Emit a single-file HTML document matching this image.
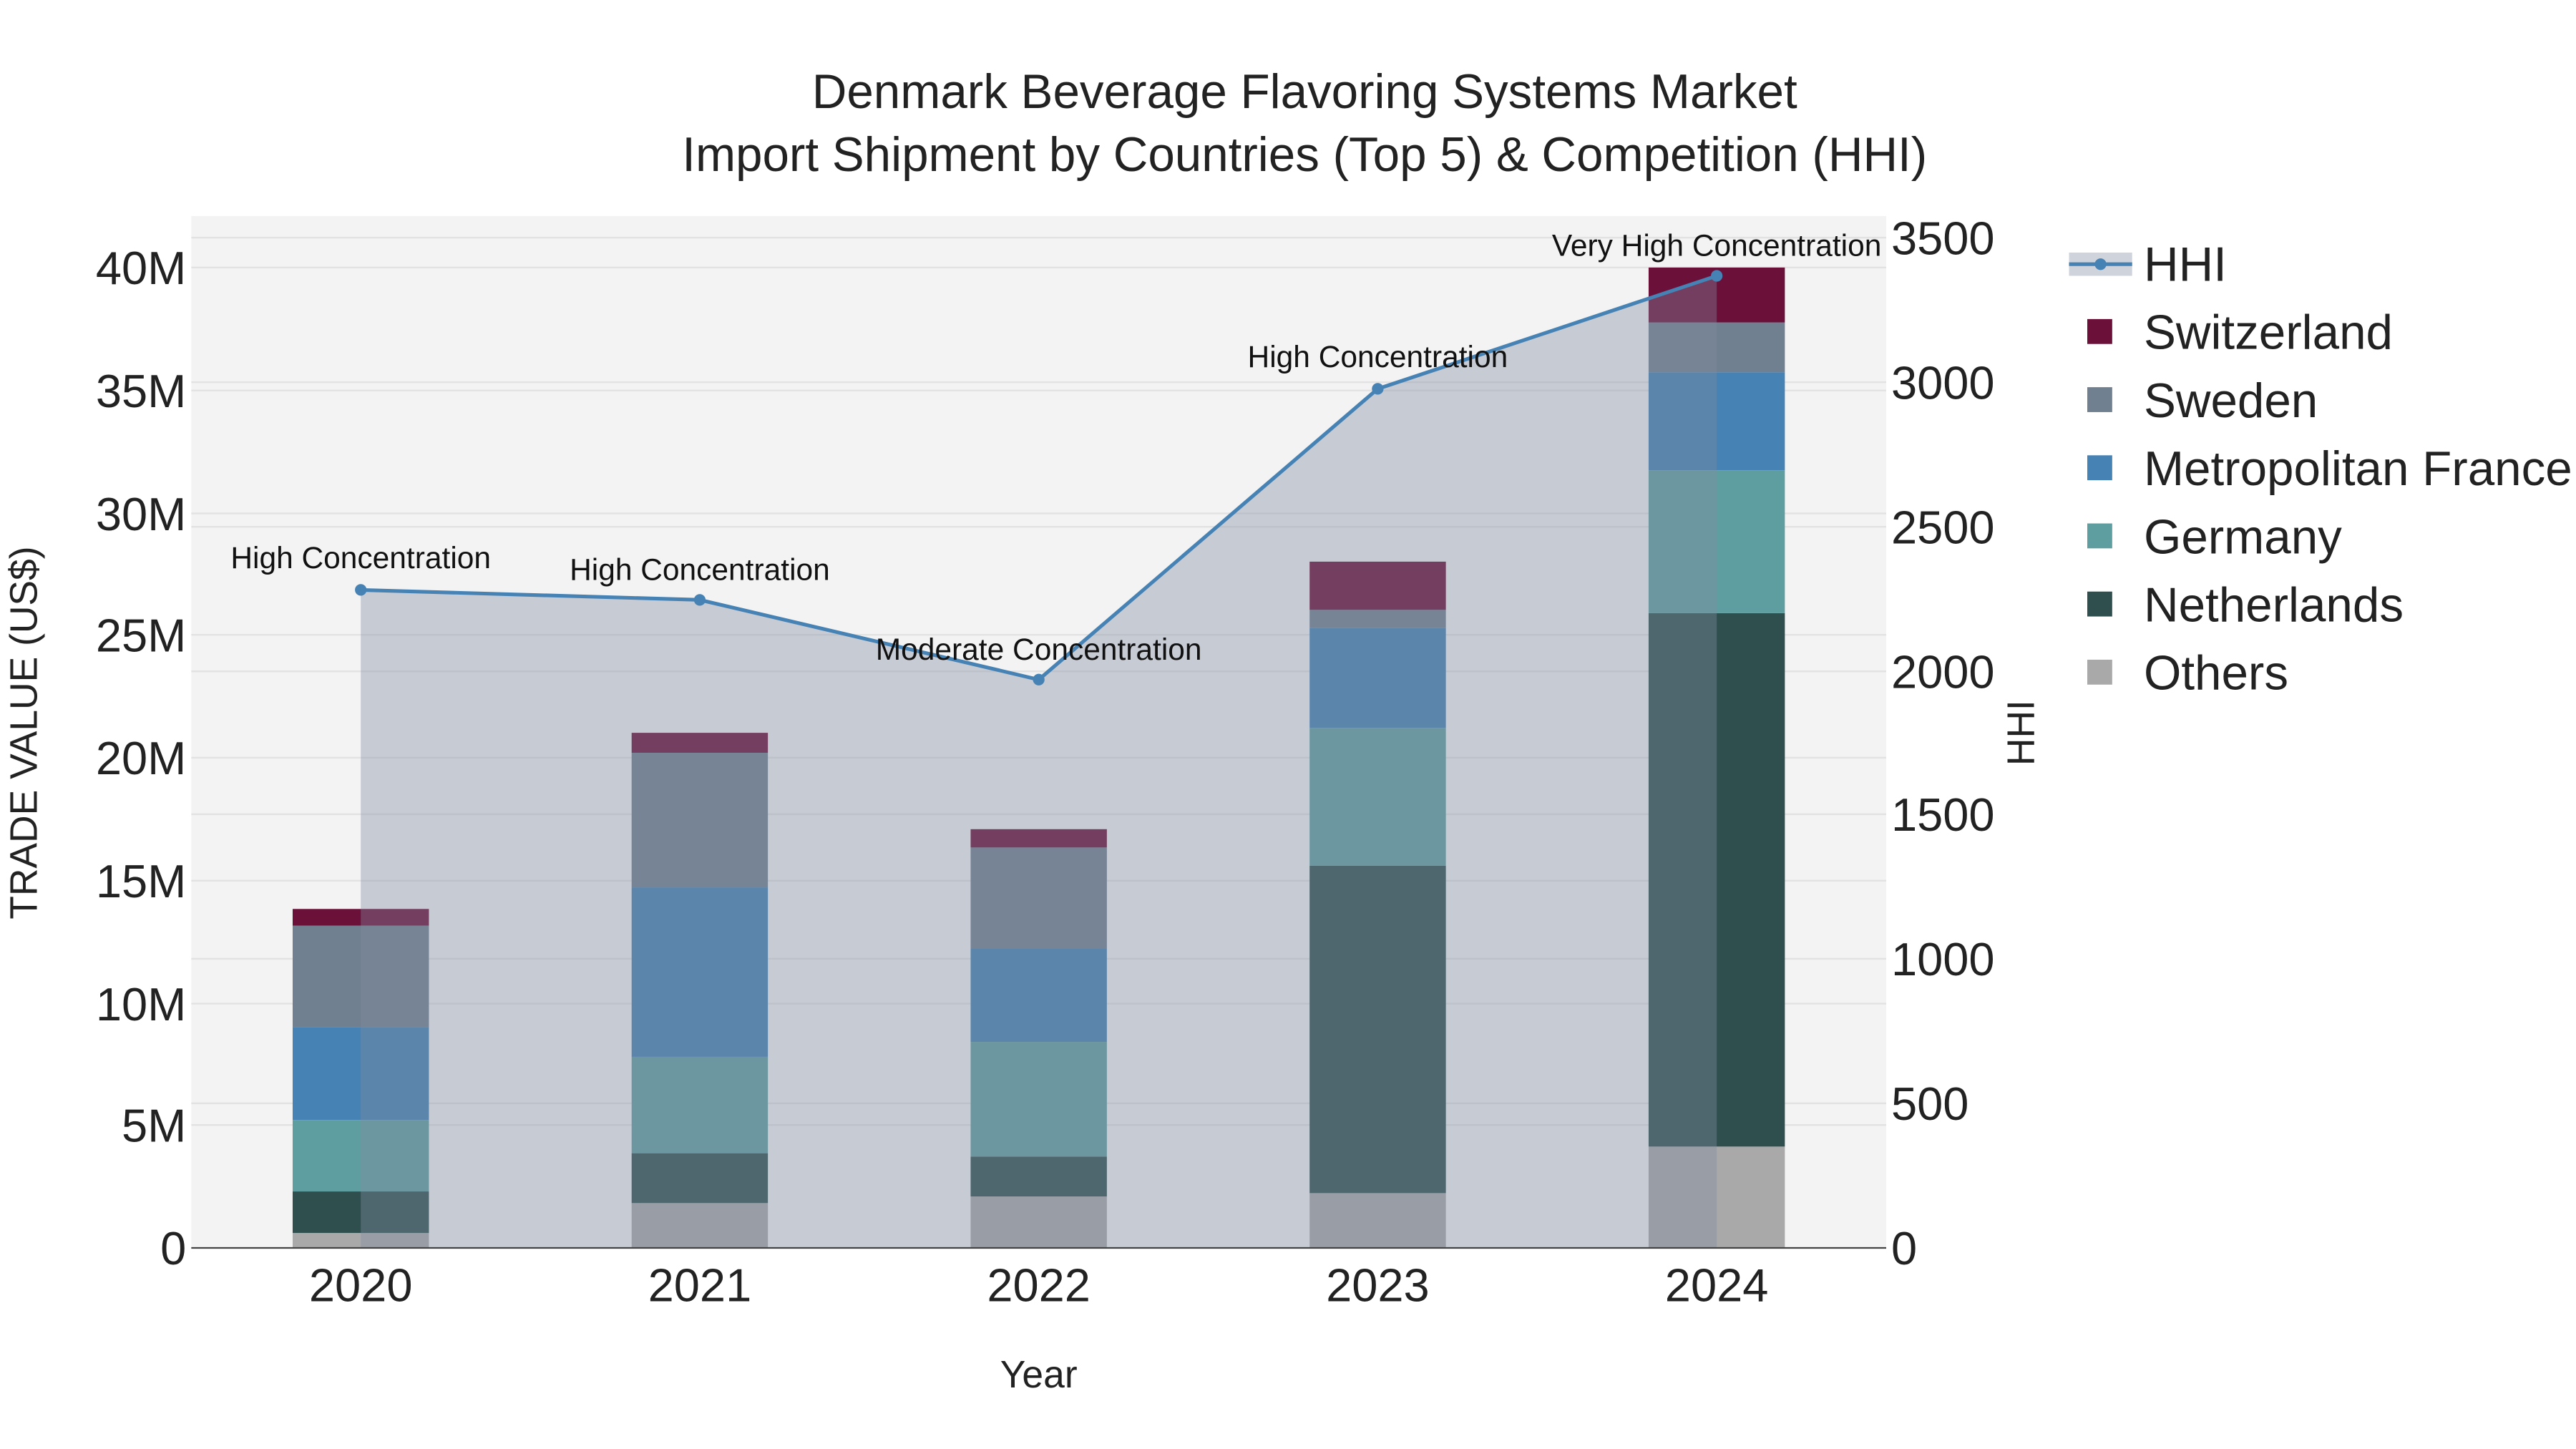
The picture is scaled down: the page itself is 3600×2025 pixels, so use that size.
<!DOCTYPE html>
<html><head><meta charset="utf-8"><style>
html,body{margin:0;padding:0;background:#fff;}
svg{display:block;}
text{font-family:"Liberation Sans",Arial,sans-serif;}
</style></head><body>
<svg width="3600" height="2025" viewBox="0 0 1550 872" xmlns="http://www.w3.org/2000/svg">
<rect width="1550" height="872" fill="#fff"/>
<rect x="115" y="130" width="1020" height="621" fill="#f3f3f3"/>
<g stroke="#e2e2e2" stroke-width="1">
<line x1="115" x2="1135" y1="677" y2="677"/><line x1="115" x2="1135" y1="604" y2="604"/>
<line x1="115" x2="1135" y1="530" y2="530"/><line x1="115" x2="1135" y1="456" y2="456"/>
<line x1="115" x2="1135" y1="382" y2="382"/><line x1="115" x2="1135" y1="309" y2="309"/>
<line x1="115" x2="1135" y1="235" y2="235"/><line x1="115" x2="1135" y1="161" y2="161"/>
<line x1="115" x2="1135" y1="664" y2="664"/><line x1="115" x2="1135" y1="577" y2="577"/>
<line x1="115" x2="1135" y1="490" y2="490"/><line x1="115" x2="1135" y1="404" y2="404"/>
<line x1="115" x2="1135" y1="317" y2="317"/><line x1="115" x2="1135" y1="230" y2="230"/>
<line x1="115" x2="1135" y1="143" y2="143"/>
</g>
<g>
<rect x="176" y="742" width="82" height="9" fill="#a9a9a9"/>
<rect x="176" y="717" width="82" height="25" fill="#2f4f4f"/>
<rect x="176" y="674" width="82" height="43" fill="#5f9ea0"/>
<rect x="176" y="618" width="82" height="56" fill="#4682b4"/>
<rect x="176" y="557" width="82" height="61" fill="#708090"/>
<rect x="176" y="547" width="82" height="10" fill="#6b1038"/>

<rect x="380" y="724" width="82" height="27" fill="#a9a9a9"/>
<rect x="380" y="694" width="82" height="30" fill="#2f4f4f"/>
<rect x="380" y="636" width="82" height="58" fill="#5f9ea0"/>
<rect x="380" y="534" width="82" height="102" fill="#4682b4"/>
<rect x="380" y="453" width="82" height="81" fill="#708090"/>
<rect x="380" y="441" width="82" height="12" fill="#6b1038"/>

<rect x="584" y="720" width="82" height="31" fill="#a9a9a9"/>
<rect x="584" y="696" width="82" height="24" fill="#2f4f4f"/>
<rect x="584" y="627" width="82" height="69" fill="#5f9ea0"/>
<rect x="584" y="571" width="82" height="56" fill="#4682b4"/>
<rect x="584" y="510" width="82" height="61" fill="#708090"/>
<rect x="584" y="499" width="82" height="11" fill="#6b1038"/>

<rect x="788" y="718" width="82" height="33" fill="#a9a9a9"/>
<rect x="788" y="521" width="82" height="197" fill="#2f4f4f"/>
<rect x="788" y="438" width="82" height="83" fill="#5f9ea0"/>
<rect x="788" y="378" width="82" height="60" fill="#4682b4"/>
<rect x="788" y="367" width="82" height="11" fill="#708090"/>
<rect x="788" y="338" width="82" height="29" fill="#6b1038"/>

<rect x="992" y="690" width="82" height="61" fill="#a9a9a9"/>
<rect x="992" y="369" width="82" height="321" fill="#2f4f4f"/>
<rect x="992" y="283" width="82" height="86" fill="#5f9ea0"/>
<rect x="992" y="224" width="82" height="59" fill="#4682b4"/>
<rect x="992" y="194" width="82" height="30" fill="#708090"/>
<rect x="992" y="161" width="82" height="33" fill="#6b1038"/>
</g>
<path d="M217,355 L421,361 L625,409 L829,234 L1033,166 L1033,751 L217,751 Z" fill="rgb(130,140,161)" fill-opacity="0.38"/>
<line x1="115" x2="1135" y1="751" y2="751" stroke="#444" stroke-width="1"/>
<polyline points="217,355 421,361 625,409 829,234 1033,166" fill="none" stroke="#4682b4" stroke-width="2.2"/>
<g fill="#4682b4"><circle cx="217" cy="355" r="3.5"/><circle cx="421" cy="361" r="3.5"/><circle cx="625" cy="409" r="3.5"/><circle cx="829" cy="234" r="3.5"/><circle cx="1033" cy="166" r="3.5"/></g>
<g font-size="18.3" fill="#111" text-anchor="middle">
<text x="217" y="342">High Concentration</text>
<text x="421" y="349">High Concentration</text>
<text x="625" y="397">Moderate Concentration</text>
<text x="829" y="221">High Concentration</text>
<text x="1033" y="154">Very High Concentration</text>
</g>
<g font-size="28" fill="#222" text-anchor="end">
<text x="112" y="761">0</text><text x="112" y="687">5M</text><text x="112" y="614">10M</text>
<text x="112" y="540">15M</text><text x="112" y="466">20M</text><text x="112" y="392">25M</text>
<text x="112" y="319">30M</text><text x="112" y="245">35M</text><text x="112" y="171">40M</text>
</g>
<g font-size="28" fill="#222" text-anchor="start">
<text x="1138" y="761">0</text><text x="1138" y="674">500</text><text x="1138" y="587">1000</text>
<text x="1138" y="500">1500</text><text x="1138" y="414">2000</text><text x="1138" y="327">2500</text>
<text x="1138" y="240">3000</text><text x="1138" y="153">3500</text>
</g>
<g font-size="28" fill="#222" text-anchor="middle">
<text x="217" y="783">2020</text><text x="421" y="783">2021</text><text x="625" y="783">2022</text>
<text x="829" y="783">2023</text><text x="1033" y="783">2024</text>
</g>
<text x="625" y="835" font-size="23" fill="#222" text-anchor="middle">Year</text>
<text transform="translate(22,441) rotate(-90)" font-size="23" fill="#222" text-anchor="middle">TRADE VALUE (US$)</text>
<text transform="translate(1224,441) rotate(-90)" font-size="23" fill="#222" text-anchor="middle">HHI</text>
<g font-size="29" fill="#222" text-anchor="middle">
<text x="785" y="65">Denmark Beverage Flavoring Systems Market</text>
<text x="785" y="103">Import Shipment by Countries (Top 5) &amp; Competition (HHI)</text>
</g>
<rect x="1245" y="152" width="38" height="14" fill="rgb(130,140,161)" fill-opacity="0.38"/>
<line x1="1245" x2="1283" y1="159" y2="159" stroke="#4682b4" stroke-width="2.2"/>
<circle cx="1264" cy="159" r="3.5" fill="#4682b4"/>
<g>
<rect x="1256" y="192" width="15" height="15" fill="#6b1038"/>
<rect x="1256" y="233" width="15" height="15" fill="#708090"/>
<rect x="1256" y="274" width="15" height="15" fill="#4682b4"/>
<rect x="1256" y="315" width="15" height="15" fill="#5f9ea0"/>
<rect x="1256" y="356" width="15" height="15" fill="#2f4f4f"/>
<rect x="1256" y="397" width="15" height="15" fill="#a9a9a9"/>
</g>
<g font-size="29" fill="#222">
<text x="1290" y="169">HHI</text>
<text x="1290" y="210">Switzerland</text>
<text x="1290" y="251">Sweden</text>
<text x="1290" y="292">Metropolitan France</text>
<text x="1290" y="333">Germany</text>
<text x="1290" y="374">Netherlands</text>
<text x="1290" y="415">Others</text>
</g>
</svg>
</body></html>
